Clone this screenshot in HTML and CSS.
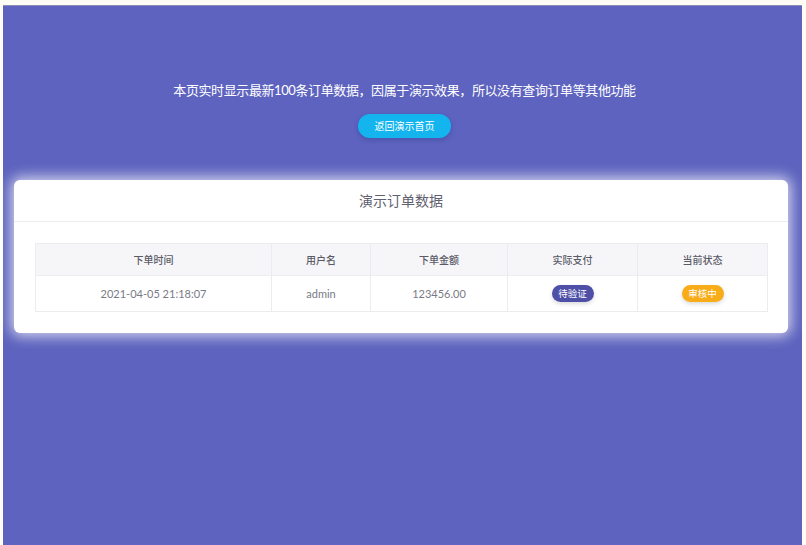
FILE: index.html
```html
<!DOCTYPE html>
<html lang="zh-CN">
<head>
    <meta charset="UTF-8">
    <meta name="viewport" content="width=device-width, initial-scale=1.0">
    <title>演示订单数据</title>
    <link rel="stylesheet" href="styles.css">
</head>
<body>
    <div class="page">
        <div class="intro">
            <p class="intro-text">本页实时显示最新100条订单数据，因属于演示效果，所以没有查询订单等其他功能</p>
            <a class="btn-home" href="#">返回演示首页</a>
        </div>

        <div class="card">
            <div class="card-header">演示订单数据</div>
            <div class="card-body">
                <table class="orders">
                    <colgroup>
                        <col style="width:236px">
                        <col style="width:99px">
                        <col style="width:137px">
                        <col style="width:130px">
                        <col style="width:130px">
                    </colgroup>
                    <thead>
                        <tr>
                            <th>下单时间</th>
                            <th>用户名</th>
                            <th>下单金额</th>
                            <th>实际支付</th>
                            <th>当前状态</th>
                        </tr>
                    </thead>
                    <tbody>
                        <tr>
                            <td>2021-04-05 21:18:07</td>
                            <td>admin</td>
                            <td>123456.00</td>
                            <td><span class="badge badge-primary">待验证</span></td>
                            <td><span class="badge badge-warning">审核中</span></td>
                        </tr>
                    </tbody>
                </table>
            </div>
        </div>
    </div>
</body>
</html>
```

FILE: styles.css
```css
html, body {
    margin: 0;
    padding: 0;
}
body {
    background: #fdfdf6;
    font-family: Lato, "Noto Sans CJK SC", sans-serif;
    padding: 5px 4px 0 3px;
}
.page {
    background: #5d63be;
    border-top: 1px solid #8a8db8;
    height: 539px;
    overflow: hidden;
}
.intro {
    text-align: center;
    padding-top: 74px;
}
.intro-text {
    margin: 0 0 0 4px;
    color: #fff;
    font-size: 13px;
    line-height: 20px;
    letter-spacing: -0.4px;
}
.btn-home {
    display: inline-block;
    margin-top: 14px;
    margin-left: 4px;
    width: 93px;
    height: 24px;
    line-height: 24px;
    border-radius: 12px;
    background: #14b4ef;
    color: #fff;
    font-size: 10px;
    text-decoration: none;
    box-shadow: 0 2px 5px rgba(20, 40, 120, 0.25);
}
.card {
    margin: 42px 14px 0 11px;
    background: #fff;
    border-radius: 6px;
    box-shadow: 0 0 14px 3px rgba(255, 255, 255, 0.75);
}
.card-header {
    height: 41px;
    line-height: 41px;
    text-align: center;
    font-size: 14px;
    color: #5f6070;
    border-bottom: 1px solid #ececf0;
}
.card-body {
    padding: 21px 21px 21px;
}
.orders {
    width: 732px;
    border-collapse: collapse;
    table-layout: fixed;
    font-size: 10px;
}
.orders th, .orders td {
    border: 1px solid #ebebf0;
    text-align: center;
    padding: 0;
}
.orders th {
    height: 31px;
    background: #f6f6f9;
    color: #5a5a66;
    font-weight: 500;
}
.orders td {
    height: 35px;
    color: #7a7a86;
    font-size: 11px;
}
.badge {
    display: inline-block;
    width: 42px;
    height: 17px;
    line-height: 17px;
    border-radius: 9px;
    color: #fff;
    font-size: 9.5px;
    box-shadow: 0 2px 4px rgba(0, 0, 0, 0.15);
}
.badge-primary {
    background: #4e4fa6;
}
.badge-warning {
    background: #f8ac17;
}
```
